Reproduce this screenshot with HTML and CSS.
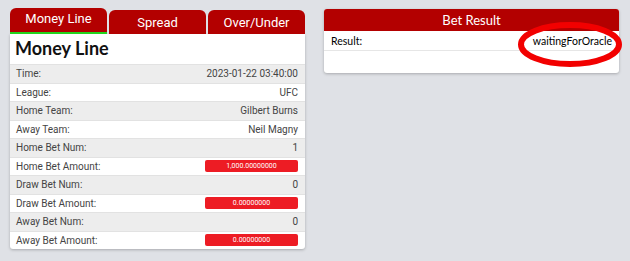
FILE: index.html
```html
<!DOCTYPE html>
<html lang="en">
<head>
    <meta charset="UTF-8">
    <meta name="viewport" content="width=device-width, initial-scale=1.0">
    <title>Bet Detail</title>
    <link rel="stylesheet" href="styles.css">
</head>
<body>
    <div class="page">
        <!-- bet info -->
        <div class="bet-card">
            <div class="tabs">
                <div class="tab active">Money Line</div>
                <div class="tab">Spread</div>
                <div class="tab">Over/Under</div>
            </div>
            <div class="bet-body">
                <h1 class="bet-title">Money Line</h1>
                <div class="row grey"><span>Time:</span><span>2023-01-22 03:40:00</span></div>
                <div class="row"><span>League:</span><span>UFC</span></div>
                <div class="row grey"><span>Home Team:</span><span>Gilbert Burns</span></div>
                <div class="row"><span>Away Team:</span><span>Neil Magny</span></div>
                <div class="row grey"><span>Home Bet Num:</span><span>1</span></div>
                <div class="row"><span>Home Bet Amount:</span><span class="amount">1,000.00000000</span></div>
                <div class="row grey"><span>Draw Bet Num:</span><span>0</span></div>
                <div class="row"><span>Draw Bet Amount:</span><span class="amount">0.00000000</span></div>
                <div class="row grey"><span>Away Bet Num:</span><span>0</span></div>
                <div class="row"><span>Away Bet Amount:</span><span class="amount">0.00000000</span></div>
            </div>
        </div>

        <!-- result -->
        <div class="result-card">
            <div class="result-head">Bet Result</div>
            <div class="result-row"><span>Result:</span><span>waitingForOracle</span></div>
            <svg class="circle-mark" width="104" height="45" viewBox="0 0 104 45">
                <ellipse cx="52" cy="22.5" rx="49" ry="19.5" fill="none" stroke="#f20000" stroke-width="6"/>
            </svg>
        </div>
    </div>
</body>
</html>
```

FILE: styles.css
```css
body {
    margin: 0;
    background-color: #dfe1e6;
    font-family: Roboto, "Liberation Sans", sans-serif;
}
.page {
    display: flex;
    align-items: flex-start;
    gap: 19px;
    padding: 8px 10px;
}
.bet-card {
    width: 295px;
}
.tabs {
    display: flex;
    align-items: flex-end;
    gap: 2px;
    height: 26px;
}
.tab {
    flex: 1;
    height: 24px;
    background-color: #b30000;
    color: #fff;
    font-size: 13px;
    text-align: center;
    line-height: 25px;
    border-radius: 6px 6px 0 0;
    box-sizing: border-box;
}
.tab.active {
    height: 26px;
    line-height: 22px;
    border-bottom: 2px solid #22d41c;
}
.bet-body {
    background-color: #fff;
    border-radius: 0 0 3px 3px;
    box-shadow: 0 1px 3px rgba(0, 0, 0, 0.25);
    overflow: hidden;
}
.bet-title {
    margin: 0;
    height: 30px;
    line-height: 29px;
    padding: 0 5px;
    font-family: Lato, "Noto Sans", sans-serif;
    font-size: 18px;
    font-weight: bold;
    color: #111;
}
.row {
    display: flex;
    justify-content: space-between;
    align-items: center;
    height: 17.5px;
    padding: 0 7px 0 6px;
    border-top: 1px solid #e2e2e2;
    font-size: 10px;
    color: #444;
}
.row.grey {
    background-color: #ededed;
}
.amount {
    width: 93px;
    height: 12px;
    line-height: 12px;
    background-color: #ed1c24;
    color: #fff;
    font-size: 7px;
    text-align: center;
    border-radius: 2px;
}
.result-card {
    position: relative;
    width: 295px;
    height: 64px;
    margin-top: 1px;
    background-color: #fff;
    border-radius: 3px;
    box-shadow: 0 1px 3px rgba(0, 0, 0, 0.25);
    font-family: Lato, "Noto Sans", sans-serif;
}
.result-head {
    height: 22px;
    line-height: 22px;
    background-color: #b30000;
    color: #fff;
    font-size: 13px;
    text-align: center;
    border-radius: 3px 3px 0 0;
}
.result-row {
    display: flex;
    justify-content: space-between;
    align-items: center;
    height: 19px;
    padding: 0 7px;
    border-bottom: 1px solid #e6e6e6;
    font-size: 10.5px;
    color: #000;
}
.circle-mark {
    position: absolute;
    left: 194px;
    top: 13px;
}
```
